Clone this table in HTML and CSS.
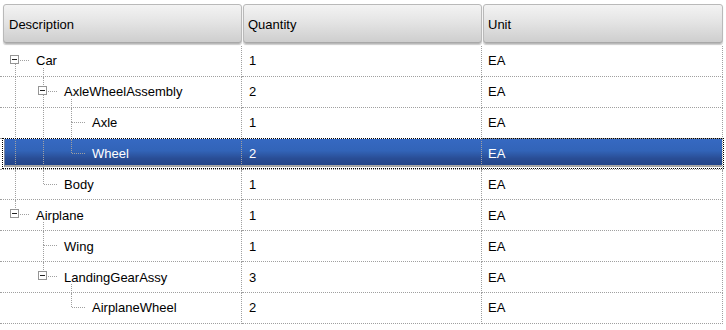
FILE: index.html
```html
<!DOCTYPE html>
<html>
<head>
<meta charset="utf-8">
<link rel="stylesheet" href="styles.css">
</head>
<body>
<div class="grid">
  <div class="head">
    <div class="hcell first">Description</div>
    <div class="hcell">Quantity</div>
    <div class="hcell">Unit</div>
  </div>

  <div class="row">
    <div class="cell tree">
      <span class="slot"><i class="down"></i><i class="h box-h"></i><b class="box"></b></span>
      <span class="label open">Car</span>
    </div>
    <div class="cell">1</div>
    <div class="cell unit">EA</div>
  </div>

  <div class="row">
    <div class="cell tree">
      <span class="slot v"></span>
      <span class="slot"><i class="up"></i><i class="down"></i><i class="h box-h"></i><b class="box"></b></span>
      <span class="label open">AxleWheelAssembly</span>
    </div>
    <div class="cell">2</div>
    <div class="cell unit">EA</div>
  </div>

  <div class="row">
    <div class="cell tree">
      <span class="slot v"></span>
      <span class="slot v"></span>
      <span class="slot"><i class="up"></i><i class="down"></i><i class="h"></i></span>
      <span class="label">Axle</span>
    </div>
    <div class="cell">1</div>
    <div class="cell unit">EA</div>
  </div>

  <div class="row sel">
    <div class="cell tree">
      <span class="slot v"></span>
      <span class="slot v"></span>
      <span class="slot"><i class="up"></i><i class="h"></i></span>
      <span class="label">Wheel</span>
    </div>
    <div class="cell">2</div>
    <div class="cell unit">EA</div>
  </div>

  <div class="row">
    <div class="cell tree">
      <span class="slot v"></span>
      <span class="slot"><i class="up"></i><i class="h"></i></span>
      <span class="label">Body</span>
    </div>
    <div class="cell">1</div>
    <div class="cell unit">EA</div>
  </div>

  <div class="row">
    <div class="cell tree">
      <span class="slot"><i class="up"></i><i class="h box-h"></i><b class="box"></b></span>
      <span class="label open">Airplane</span>
    </div>
    <div class="cell">1</div>
    <div class="cell unit">EA</div>
  </div>

  <div class="row">
    <div class="cell tree">
      <span class="slot"></span>
      <span class="slot"><i class="up"></i><i class="down"></i><i class="h"></i></span>
      <span class="label">Wing</span>
    </div>
    <div class="cell">1</div>
    <div class="cell unit">EA</div>
  </div>

  <div class="row">
    <div class="cell tree">
      <span class="slot"></span>
      <span class="slot"><i class="up"></i><i class="h box-h"></i><b class="box"></b></span>
      <span class="label open">LandingGearAssy</span>
    </div>
    <div class="cell">3</div>
    <div class="cell unit">EA</div>
  </div>

  <div class="row">
    <div class="cell tree">
      <span class="slot"></span>
      <span class="slot"></span>
      <span class="slot"><i class="up"></i><i class="h"></i></span>
      <span class="label">AirplaneWheel</span>
    </div>
    <div class="cell">2</div>
    <div class="cell unit">EA</div>
  </div>
</div>
</body>
</html>
```

FILE: styles.css
```css
html, body {
  margin: 0;
  background: #fff;
}

body {
  font: 13px "Liberation Sans", Arial, sans-serif;
  color: #000;
}

.grid {
  width: 723px;
}

/* column headers */
.head {
  display: grid;
  grid-template-columns: 242px 240px 241px;
  padding-top: 4px;
  margin-bottom: 2px;
}

.hcell {
  height: 40px;
  box-sizing: border-box;
  margin-left: 1px;
  padding-left: 4px;
  display: flex;
  align-items: center;
  border: 1px solid #b9b9b9;
  border-radius: 3px;
  background: linear-gradient(#f3f3f3, #e4e4e4 45%, #cdcdcd);
  box-shadow: inset 0 -1px #a8a8a8, 0 1px 1px rgba(0, 0, 0, 0.2);
}

.hcell.first {
  margin-left: 3px;
  padding-left: 5px;
}

/* body rows */
.row {
  display: grid;
  grid-template-columns: 242px 240px 241px;
  height: 30.875px;
  position: relative;
}

.cell {
  position: relative;
  z-index: 1;
  box-sizing: border-box;
  display: flex;
  align-items: center;
  padding-left: 7px;
  border-right: 1px dotted #a0a0a0;
  border-bottom: 1px dotted #a0a0a0;
  white-space: nowrap;
}

.cell.unit {
  padding-left: 6px;
}

/* tree column: indent slots with connector lines */
.cell.tree {
  padding-left: 1px;
  align-items: stretch;
}

.slot {
  flex: none;
  width: 28px;
  position: relative;
}

.slot.v::before {
  content: "";
  position: absolute;
  left: 14px;
  top: 0;
  bottom: -1px;
  border-left: 1px dotted #a0a0a0;
}

.slot i {
  position: absolute;
}

.slot .up {
  left: 14px;
  top: 0;
  height: 14px;
  border-left: 1px dotted #a0a0a0;
}

.slot .down {
  left: 14px;
  top: 14px;
  bottom: -1px;
  border-left: 1px dotted #a0a0a0;
}

.slot .h {
  left: 15px;
  width: 13px;
  top: 14px;
  border-top: 1px dotted #a0a0a0;
}

.slot .box-h {
  left: 19px;
  width: 9px;
}

/* expander box with minus sign */
.box {
  position: absolute;
  left: 9px;
  top: 9px;
  width: 9px;
  height: 9px;
  box-sizing: border-box;
  border: 1px solid #959595;
  background: #fff;
}

.box::before {
  content: "";
  position: absolute;
  left: 1px;
  top: 3px;
  width: 5px;
  height: 1px;
  background: #222;
}

.label {
  position: relative;
  display: flex;
  align-items: center;
  padding-left: 7px;
}

/* stub line leading down to the first child */
.label.open::after {
  content: "";
  position: absolute;
  left: 14px;
  top: 22px;
  bottom: -1px;
  border-left: 1px dotted #a0a0a0;
}

/* selected row */
.row.sel {
  color: #fff;
}

.row.sel::before {
  content: "";
  position: absolute;
  left: 4px;
  right: 1px;
  top: 0;
  bottom: 3px;
  border-left: 1px solid #7f8aa3;
  border-bottom: 2px solid #a6a6a6;
  background: linear-gradient(#3669c2, #3264b8 45%, #294d95 75%, #24468a);
}

.row.sel::after {
  content: "";
  position: absolute;
  left: 2px;
  right: -1px;
  top: -1px;
  bottom: 1px;
  border: 1px dotted #000;
  z-index: 2;
  pointer-events: none;
}
```
